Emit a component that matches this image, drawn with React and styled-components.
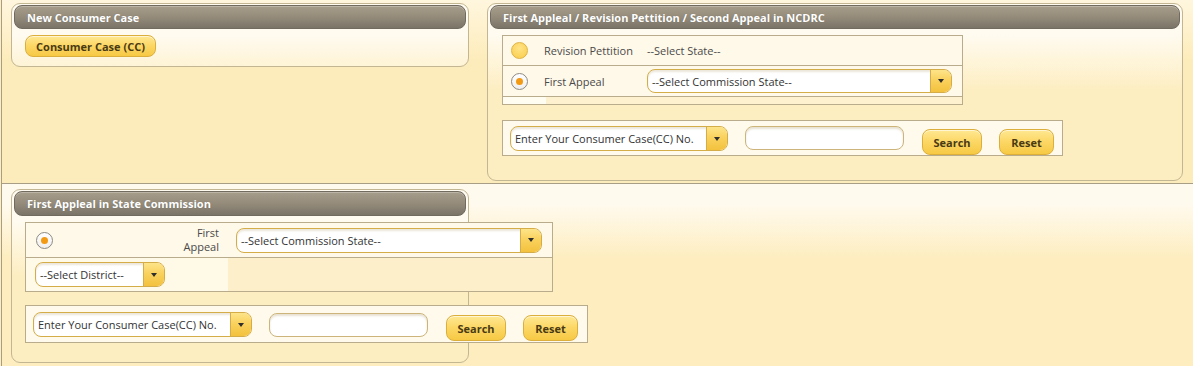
import React from "react";
import styled, { createGlobalStyle } from "styled-components";

const GlobalStyle = createGlobalStyle`
  body {
    margin: 0;
    background: #fdeebf;
    font-family: "Open Sans", "Liberation Sans", sans-serif;
    font-size: 11px;
    color: #3a3a3a;
  }
  * { box-sizing: border-box; }
`;

const Page = styled.div`
  width: 1192px;
  height: 366px;
  margin-left: 1px;
  border-left: 1px solid #a89e86;
  overflow: hidden;
`;

const TopRow = styled.div`
  display: grid;
  grid-template-columns: 485px 1fr;
  height: 184px;
  border-bottom: 1px solid #a89e86;
  background: linear-gradient(to bottom, #fff6de 0, #fdecbb 60px, #fdecbb 100%);
`;

const BottomRow = styled.div`
  height: 182px;
  padding: 5px 0 0 9px;
  background: linear-gradient(to bottom, #fffaee 0, #fffaee 20px, #fdedbf 75px, #fdedbf 100%);
`;

const Cell = styled.div`
  padding: 3px 0 0 ${(p) => p.$left || 0}px;
`;

const Panel = styled.div`
  width: ${(p) => p.$width}px;
  height: ${(p) => p.$height}px;
  border: 1px solid #c3b692;
  border-radius: 9px;
  padding: 1px 2px;
  background: linear-gradient(to bottom, #fffbf1 0, #fffbf1 30px, #fdeec2 85px, #fdeec2 100%);
`;

const PanelHeader = styled.div`
  height: ${(p) => p.$height || 24}px;
  border-radius: 8px;
  border: 1px solid #706a5f;
  background: linear-gradient(to bottom, #a69d8b 0, #948b7a 50%, #7a7468 100%);
  box-shadow: inset 0 1px 0 rgba(255, 255, 255, 0.25);
  color: #ffffff;
  font-weight: 700;
  font-size: 11px;
  padding-left: 12px;
  display: flex;
  align-items: center;
  text-shadow: 0 0 1px rgba(0, 0, 0, 0.2);
`;

const PanelBody = styled.div`
  padding: ${(p) => p.$top || 6}px 0 0 ${(p) => p.$left || 11}px;
`;

const YellowButton = styled.button`
  height: ${(p) => p.$height || 26}px;
  width: ${(p) => p.$width}px;
  margin-top: ${(p) => p.$top || 0}px;
  margin-left: ${(p) => p.$gap || 0}px;
  padding: 0;
  border: 1px solid #dcaf3c;
  border-radius: 8px;
  background: linear-gradient(to bottom, #ffe893 0, #fcd868 45%, #f7c944 100%);
  box-shadow: inset 0 1px 0 rgba(255, 255, 255, 0.6);
  font-family: "Open Sans", "Liberation Sans", sans-serif;
  font-weight: 700;
  font-size: 11px;
  color: #4a3a14;
  flex-shrink: 0;
`;

const Grid = styled.div`
  width: ${(p) => p.$width}px;
  border: 1px solid #b9ac8d;
  background: ${(p) => p.$bg || "#fff9e9"};
`;

const Row = styled.div`
  display: grid;
  grid-template-columns: ${(p) => p.$cols};
  height: ${(p) => p.$height}px;
  align-items: stretch;
  & + & {
    border-top: 1px solid #b9ac8d;
  }
`;

const Part = styled.div`
  display: flex;
  align-items: center;
  justify-content: ${(p) => (p.$right ? "flex-end" : "flex-start")};
  padding: 0 ${(p) => p.$pr || 0}px 0 ${(p) => p.$pl || 0}px;
  background: ${(p) => p.$bg || "transparent"};
  color: #4a4a4a;
`;

const TwoLine = styled.span`
  text-align: right;
  line-height: 14px;
`;

const FilledRadio = styled.span`
  width: 17px;
  height: 17px;
  border-radius: 50%;
  border: 1px solid #e0b343;
  background: radial-gradient(circle at 50% 35%, #ffe387 0, #fbd35b 70%);
`;

const CheckedRadio = styled.span`
  width: 17px;
  height: 17px;
  border-radius: 50%;
  border: 1px solid #8e8a82;
  background: linear-gradient(to bottom, #ffffff, #efefef);
  display: flex;
  align-items: center;
  justify-content: center;
  &::after {
    content: "";
    width: 7px;
    height: 7px;
    border-radius: 50%;
    background: #f29a14;
  }
`;

const Select = styled.div`
  width: ${(p) => p.$width}px;
  height: ${(p) => p.$height || 24}px;
  margin-top: ${(p) => p.$top || 0}px;
  border: 1px solid #d5ad48;
  border-radius: 8px;
  background: #ffffff;
  box-shadow: inset 0 2px 2px rgba(180, 160, 110, 0.25);
  display: flex;
  overflow: hidden;
  flex-shrink: 0;
`;

const SelectText = styled.span`
  flex: 1;
  padding-left: 4px;
  display: flex;
  align-items: center;
  color: #333;
  white-space: nowrap;
`;

const SelectArrow = styled.span`
  width: 21px;
  border-left: 1px solid #d5ad48;
  background: linear-gradient(to bottom, #fde489 0, #f9d05a 50%, #f3c23e 100%);
  display: flex;
  align-items: center;
  justify-content: center;
  &::after {
    content: "";
    border-left: 3px solid transparent;
    border-right: 3px solid transparent;
    border-top: 4px solid #2e2e2e;
  }
`;

const TextBox = styled.div`
  width: 159px;
  height: 24px;
  margin-top: ${(p) => p.$top || 0}px;
  margin-left: ${(p) => p.$gap}px;
  border: 1px solid #cdb47a;
  border-radius: 8px;
  background: #ffffff;
  box-shadow: inset 0 2px 2px rgba(180, 160, 110, 0.3);
  flex-shrink: 0;
`;

const SearchBar = styled.div`
  width: ${(p) => p.$width}px;
  height: ${(p) => p.$height}px;
  margin-top: ${(p) => p.$top}px;
  border: 1px solid #b9ac8d;
  background: #fffaeb;
  display: flex;
  align-items: flex-start;
  padding: 0 0 0 7px;
`;

function DropDown({ label, width, height, top }) {
  return (
    <Select $width={width} $height={height} $top={top}>
      <SelectText>{label}</SelectText>
      <SelectArrow />
    </Select>
  );
}

function CaseSearch({ width, height, top, selectWidth, btnTop, inputTop, sTop }) {
  return (
    <SearchBar $width={width} $height={height} $top={top}>
      <DropDown label="Enter Your Consumer Case(CC) No." width={selectWidth} height={25} top={sTop} />
      <TextBox $gap={17} $top={inputTop} />
      <YellowButton $width={60} $top={btnTop} $gap={18}>Search</YellowButton>
      <YellowButton $width={55} $top={btnTop} $gap={17}>Reset</YellowButton>
    </SearchBar>
  );
}

export default function App() {
  return (
    <>
      <GlobalStyle />
      <Page>
        <TopRow>
          <Cell $left={9}>
            <Panel $width={458} $height={64}>
              <PanelHeader>New Consumer Case</PanelHeader>
              <PanelBody>
                <YellowButton $width={131} $height={22}>Consumer Case (CC)</YellowButton>
              </PanelBody>
            </Panel>
          </Cell>
          <Cell>
            <Panel $width={696} $height={178}>
              <PanelHeader>First Appleal / Revision Pettition / Second Appeal in NCDRC</PanelHeader>
              <PanelBody $left={12}>
                <Grid $width={461}>
                  <Row $cols="34px 110px 1fr" $height={29}>
                    <Part $pl={8}><FilledRadio /></Part>
                    <Part $pl={7}>Revision Pettition</Part>
                    <Part>--Select State--</Part>
                  </Row>
                  <Row $cols="34px 110px 1fr" $height={31}>
                    <Part $pl={8}><CheckedRadio /></Part>
                    <Part $pl={7}>First Appeal</Part>
                    <Part><DropDown label="--Select Commission State--" width={305} /></Part>
                  </Row>
                  <Row $cols="43px 1fr" $height={8}>
                    <Part $bg="#fffcf2" />
                    <Part $bg="#fdf1cf" />
                  </Row>
                </Grid>
                <CaseSearch width={561} height={36} top={15} selectWidth={218} sTop={5} inputTop={5} btnTop={8} />
              </PanelBody>
            </Panel>
          </Cell>
        </TopRow>
        <BottomRow>
          <Panel $width={458} $height={174}>
            <PanelHeader $height={25}>First Appleal in State Commission</PanelHeader>
            <PanelBody $left={11} $top={6}>
              <Grid $width={528}>
                <Row $cols="141px 66px 1fr" $height={34}>
                  <Part $pl={10}><CheckedRadio /></Part>
                  <Part $right $pr={14}>
                    <TwoLine>First<br />Appeal</TwoLine>
                  </Part>
                  <Part $pl={3}><DropDown label="--Select Commission State--" width={306} height={25} /></Part>
                </Row>
                <Row $cols="202px 1fr" $height={34}>
                  <Part $pl={9} $bg="#fff9e8">
                    <DropDown label="--Select District--" width={130} height={25} />
                  </Part>
                  <Part $bg="#fcefca" />
                </Row>
              </Grid>
              <CaseSearch width={563} height={38} top={13} selectWidth={219} sTop={6} inputTop={7} btnTop={9} />
            </PanelBody>
          </Panel>
        </BottomRow>
      </Page>
    </>
  );
}
